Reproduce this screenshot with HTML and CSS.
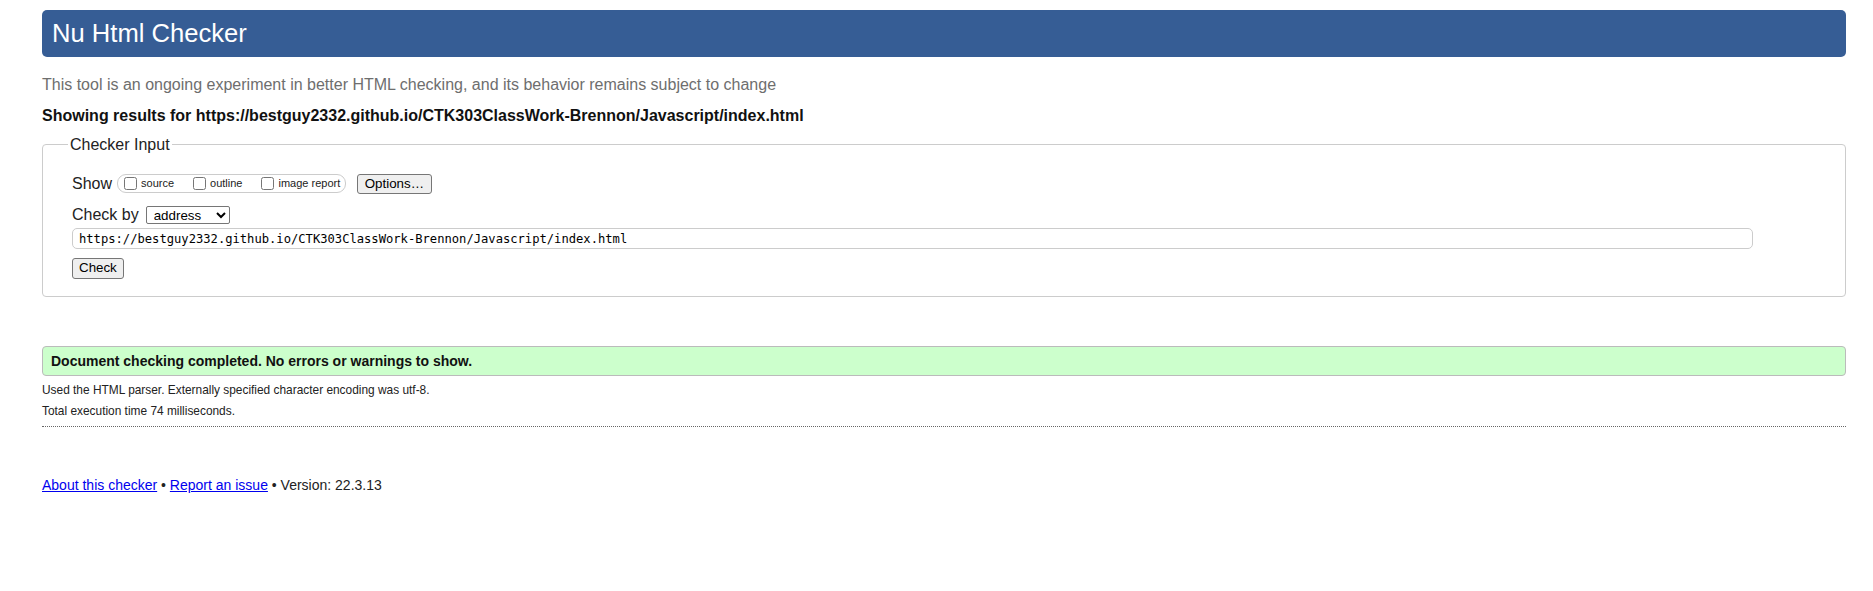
FILE: index.html
```html
<!DOCTYPE html>
<html lang="en">
<head>
<meta charset="utf-8">
<title>Showing results for https://bestguy2332.github.io/CTK303ClassWork-Brennon/Javascript/index.html - Nu Html Checker</title>
<link rel="stylesheet" href="styles.css">
</head>
<body>
<h1 class="title">Nu Html Checker</h1>
<p class="subtitle">This tool is an ongoing experiment in better HTML checking, and its behavior remains subject to change</p>
<p class="results-for">Showing results for https://bestguy2332.github.io/CTK303ClassWork-Brennon/Javascript/index.html</p>
<form class="checker" action="#">
  <fieldset class="input-box">
    <legend class="input-legend">Checker Input</legend>
    <div class="row show-row">
      <span class="row-label">Show</span>
      <span class="show-options">
        <label class="opt"><input type="checkbox" class="cb">source</label>
        <label class="opt"><input type="checkbox" class="cb">outline</label>
        <label class="opt"><input type="checkbox" class="cb">image report</label>
      </span>
      <button type="button" class="btn options-btn">Options…</button>
    </div>
    <div class="row checkby-row">
      <label class="row-label">Check by</label>
      <select class="checkby-select">
        <option>address</option>
        <option>file upload</option>
        <option>text input</option>
      </select>
    </div>
    <div class="row url-row">
      <input class="url-input" type="url" value="https://bestguy2332.github.io/CTK303ClassWork-Brennon/Javascript/index.html">
    </div>
    <div class="row submit-row">
      <input class="btn check-btn" type="submit" value="Check">
    </div>
  </fieldset>
</form>
<p class="success">Document checking completed. No errors or warnings to show.</p>
<p class="details first">Used the HTML parser. Externally specified character encoding was utf-8.</p>
<p class="details">Total execution time 74 milliseconds.</p>
<div class="divider"></div>
<p class="footer"><a class="footer-link" href="#">About this checker</a> • <a class="footer-link" href="#">Report an issue</a> • Version: 22.3.13</p>
</body>
</html>
```

FILE: styles.css
```css
html {
  background: #fff;
}

body {
  margin: 0;
  padding: 10px 27px 40px 42px;
  font-family: "Liberation Sans", Arial, sans-serif;
  color: #000;
}

.title {
  margin: 0;
  padding: 9px 10px;
  background: #365d95;
  color: #fff;
  font-size: 25.6px;
  line-height: 29px;
  font-weight: normal;
  border-radius: 5px;
}

.subtitle {
  margin: 18.5px 0 0;
  font-size: 16px;
  line-height: 18px;
  color: #6e6e6e;
}

.results-for {
  margin: 13px 0 0;
  font-size: 16px;
  line-height: 18px;
  font-weight: bold;
  color: #111;
}

.checker {
  margin: 11px 0 0;
}

.input-box {
  margin: 0;
  padding: 20px 29px 17px 29px;
  border: 1px solid #ccc;
  border-radius: 4px;
  min-width: 0;
}

.input-legend {
  margin-left: -4px;
  padding: 0 2px;
  font-size: 16px;
  line-height: 18px;
  color: #222;
}

.row {
  display: flex;
}

.row-label {
  font-size: 16px;
  line-height: 18px;
  color: #222;
}

.show-row {
  align-items: center;
  height: 20.5px;
}

.show-options {
  display: inline-flex;
  align-items: center;
  height: 17px;
  margin-left: 5px;
  padding: 0 5px 0 6px;
  border: 1px solid #ccc;
  border-radius: 9px;
}

.opt {
  display: inline-flex;
  align-items: center;
  font-size: 11px;
  line-height: 13px;
  color: #222;
  margin-right: 19px;
}

.opt:last-child {
  margin-right: 0;
}

.cb {
  width: 13px;
  height: 13px;
  margin: 0 4px 0 0;
}

.btn {
  font-family: "Liberation Sans", Arial, sans-serif;
  font-size: 13.33px;
  line-height: 16px;
  padding: 1px 6px;
  border: 1px solid #767676;
  border-radius: 3px;
  background: #efefef;
  color: #000;
  height: 20.5px;
  margin: 0;
}

.options-btn {
  margin-left: 10.5px;
  padding: 1px 7px;
}

.checkby-row {
  align-items: baseline;
  margin-top: 12px;
}

.checkby-select {
  margin-left: 7px;
  width: 84px;
  height: 18px;
  padding: 0 0 0 3px;
  font-family: "Liberation Sans", Arial, sans-serif;
  font-size: 13.33px;
  border: 1px solid #767676;
  border-radius: 2px;
  background: #fff;
  color: #000;
}

.url-row {
  margin-top: 4px;
}

.url-input {
  width: 1681px;
  height: 21px;
  box-sizing: border-box;
  margin: 0;
  padding: 1px 6px;
  border: 1px solid #ccc;
  border-radius: 5px;
  font-family: "DejaVu Sans Mono", "Liberation Mono", monospace;
  font-size: 12.15px;
  color: #000;
  background: #fff;
}

.submit-row {
  margin-top: 9px;
}

.check-btn {
  padding: 1px 6px;
}

.success {
  margin: 49.3px 0 0;
  padding: 6px 8px;
  background: #ccffcc;
  border: 1px solid #bbb;
  border-radius: 4px;
  font-size: 14px;
  line-height: 16px;
  font-weight: bold;
  color: #111;
}

.details {
  margin: 6.5px 0 0;
  font-size: 11.9px;
  line-height: 14px;
  color: #222;
}

.details.first {
  margin-top: 7.5px;
}

.divider {
  margin-top: 8.5px;
  border-bottom: 1px dotted #666;
}

.footer {
  margin: 49.5px 0 0;
  font-size: 14px;
  line-height: 16px;
  color: #222;
}

.footer-link {
  color: #0000ee;
  text-decoration: underline;
}
```
